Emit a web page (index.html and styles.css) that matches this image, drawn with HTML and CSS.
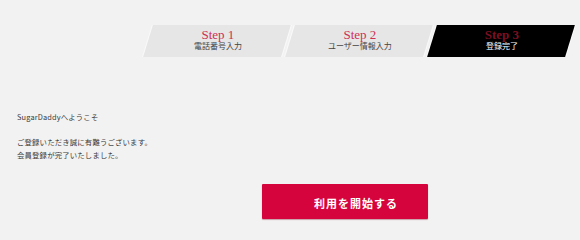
FILE: index.html
```html
<!DOCTYPE html>
<html lang="ja">
<head>
<meta charset="utf-8">
<title>登録完了</title>
<link rel="stylesheet" href="styles.css">
</head>
<body>
<nav class="steps">
  <div class="step">
    <div class="step-inner">
      <span class="step-label">Step 1</span>
      <span class="step-name">電話番号入力</span>
    </div>
  </div>
  <div class="step">
    <div class="step-inner">
      <span class="step-label">Step 2</span>
      <span class="step-name">ユーザー情報入力</span>
    </div>
  </div>
  <div class="step step-active">
    <div class="step-inner">
      <span class="step-label">Step 3</span>
      <span class="step-name">登録完了</span>
    </div>
  </div>
</nav>
<main class="content">
  <p class="welcome">SugarDaddyへようこそ</p>
  <p class="message">ご登録いただき誠に有難うございます。<br>会員登録が完了いたしました。</p>
  <div class="actions">
    <button class="start-btn" type="button">利用を開始する</button>
  </div>
</main>
</body>
</html>
```

FILE: styles.css
```css
html, body {
  margin: 0;
  padding: 0;
}
body {
  background: #f2f2f2;
  color: #333;
  font-family: "Noto Sans CJK JP", "Noto Sans", sans-serif;
  width: 580px;
  height: 239px;
  overflow: hidden;
}
.steps {
  display: flex;
  justify-content: flex-end;
  gap: 4px;
  padding: 25px 10px 0 0;
}
.step {
  width: 138px;
  height: 32px;
  background: #e6e6e6;
  transform: skewX(-17deg);
  box-shadow: 1px 0 0 #fafafa, -1px 0 0 #fafafa;
}
.step-inner {
  transform: skewX(17deg);
  display: flex;
  flex-direction: column;
  align-items: center;
  padding-top: 4px;
}
.step-label {
  font-family: "Liberation Serif", "Times New Roman", serif;
  font-size: 13px;
  line-height: 12px;
  color: #cf2f55;
}
.step-name {
  font-size: 8px;
  line-height: 10px;
  color: #444;
}
.step-active {
  background: #000;
}
.step-active .step-label {
  color: #7a0f22;
  font-weight: bold;
}
.step-active .step-name {
  color: #fff;
}
.content {
  padding: 53px 0 0 17px;
}
.welcome, .message {
  margin: 0;
  font-size: 7.4px;
  line-height: 13px;
  letter-spacing: 0.15px;
  color: #3a3a3a;
}
.message {
  margin-top: 12px;
}
.actions {
  margin-top: 23px;
  padding-left: 245px;
}
.start-btn {
  display: block;
  width: 166px;
  height: 35px;
  border: 0;
  border-radius: 1px;
  background: #d6043c;
  box-shadow: 0 1px 1px rgba(120, 0, 30, 0.35);
  color: #fff;
  font-family: "Noto Sans CJK JP", "Noto Sans", sans-serif;
  font-size: 11px;
  font-weight: bold;
  letter-spacing: 1px;
  padding: 3px 0 0 22px;
  cursor: pointer;
}
```
